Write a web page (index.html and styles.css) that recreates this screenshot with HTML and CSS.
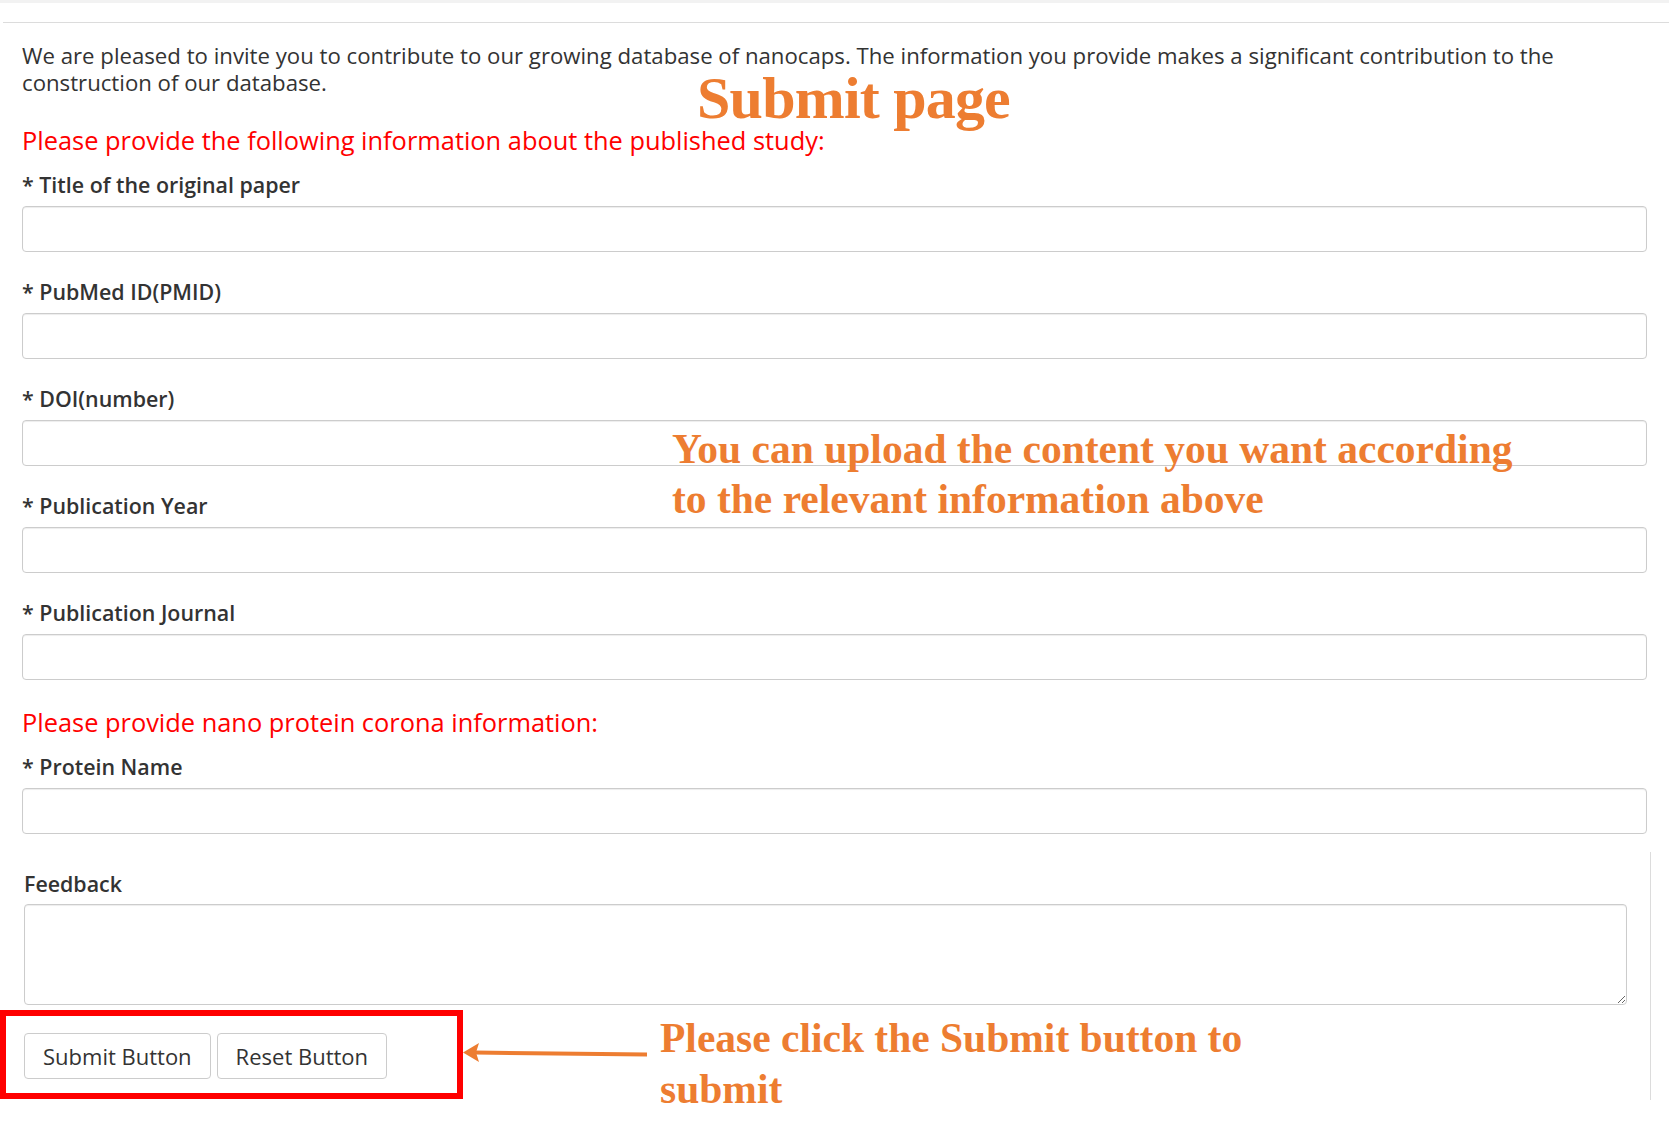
FILE: index.html
```html
<!DOCTYPE html>
<html lang="en">
<head>
<meta charset="utf-8">
<title>Submit page</title>
<link rel="stylesheet" href="styles.css">
</head>
<body>
<div class="topbar"></div>
<div class="rule"></div>
<main class="content">
  <p class="intro">We are pleased to invite you to contribute to our growing database of nanocaps. The information you provide makes a significant contribution to the construction of our database.</p>
  <form class="form">
    <h3 class="section-title">Please provide the following information about the published study:</h3>
    <div class="field">
      <label class="field-label">* Title of the original paper</label>
      <input class="field-input" type="text">
    </div>
    <div class="field">
      <label class="field-label">* PubMed ID(PMID)</label>
      <input class="field-input" type="text">
    </div>
    <div class="field">
      <label class="field-label">* DOI(number)</label>
      <input class="field-input" type="text">
    </div>
    <div class="field">
      <label class="field-label">* Publication Year</label>
      <input class="field-input" type="text">
    </div>
    <div class="field">
      <label class="field-label">* Publication Journal</label>
      <input class="field-input" type="text">
    </div>
    <h3 class="section-title">Please provide nano protein corona information:</h3>
    <div class="field field-last">
      <label class="field-label">* Protein Name</label>
      <input class="field-input" type="text">
    </div>
  </form>
</main>
<section class="feedback">
  <label class="field-label">Feedback</label>
  <textarea class="feedback-input"></textarea>
  <div class="actions">
    <button class="btn" type="button">Submit Button</button>
    <button class="btn" type="button">Reset Button</button>
  </div>
</section>

<div class="note note-title">Submit page</div>
<div class="note note-upload">You can upload the content you want according to the relevant information above</div>
<div class="note note-click">Please click the Submit button to submit</div>
<div class="highlight-box"></div>
<svg class="arrow" width="200" height="30" viewBox="0 0 200 30">
  <line x1="12" y1="13.5" x2="184" y2="15.5" stroke="#ED7D31" stroke-width="4"/>
  <polygon points="0,13.5 16,4 13,13.5 16,23" fill="#ED7D31"/>
</svg>
</body>
</html>
```

FILE: styles.css
```css
html, body {
  margin: 0;
  padding: 0;
  background: #fff;
}
body {
  width: 1669px;
  font-family: "Open Sans", "Noto Sans", sans-serif;
  color: #333;
  position: relative;
  min-height: 1139px;
}
.topbar {
  height: 3px;
  background: #f2f2f2;
}
.rule {
  margin: 19px 0 0 3px;
  border-top: 1px solid #dcdcdc;
}
.content {
  padding: 0 22px;
}
.intro {
  margin: 19px 0 28px;
  font-size: 22.2px;
  line-height: 27px;
  color: #333;
}
.form {
  margin: 0;
}
.section-title {
  margin: 1px 0 15px;
  font-size: 25.4px;
  line-height: 32px;
  font-weight: 400;
  color: #f00;
}
.field {
  margin-bottom: 26px;
}
.field-last {
  margin-bottom: 0;
}
.field-label {
  display: block;
  font-size: 21.4px;
  line-height: 27px;
  font-weight: 600;
  color: #333;
  margin-bottom: 8px;
}
.field-input {
  display: block;
  box-sizing: border-box;
  width: 100%;
  height: 46px;
  margin: 0;
  border: 1px solid #ccc;
  border-radius: 4px;
  box-shadow: inset 0 1px 1px rgba(0,0,0,.075);
  font-family: inherit;
  font-size: 20px;
  padding: 6px 12px;
  background: #fff;
}
.feedback {
  box-sizing: border-box;
  width: 1651px;
  margin-top: 18px;
  padding: 18px 23px 21px 24px;
  border-right: 1px solid #dcdcdc;
}
.feedback .field-label {
  margin-bottom: 7px;
}
.feedback-input {
  display: block;
  box-sizing: border-box;
  width: 100%;
  height: 101px;
  margin: 0;
  border: 1px solid #ccc;
  border-radius: 4px;
  box-shadow: inset 0 1px 1px rgba(0,0,0,.075);
  font-family: inherit;
  font-size: 20px;
  padding: 6px 12px;
  resize: vertical;
}
.actions {
  display: flex;
  gap: 6px;
  margin-top: 28px;
}
.btn {
  box-sizing: border-box;
  height: 46px;
  padding: 0 18px;
  border: 1px solid #ccc;
  border-radius: 4px;
  background: #fff;
  color: #333;
  font-family: "Open Sans", "Noto Sans", sans-serif;
  font-size: 22px;
  line-height: 1;
}
.note {
  position: absolute;
  font-family: "Liberation Serif", "Times New Roman", serif;
  font-weight: 700;
  color: #ED7D31;
}
.note-title {
  left: 697px;
  top: 68px;
  font-size: 60px;
  line-height: 60px;
  letter-spacing: -0.8px;
  white-space: nowrap;
}
.note-upload {
  left: 672px;
  top: 424px;
  width: 870px;
  font-size: 41.5px;
  line-height: 50px;
}
.note-click {
  left: 660px;
  top: 1013px;
  width: 620px;
  font-size: 41.5px;
  line-height: 51px;
}
.highlight-box {
  position: absolute;
  left: 0;
  top: 1010px;
  width: 463px;
  height: 89px;
  box-sizing: border-box;
  border: 6px solid #f00;
}
.arrow {
  position: absolute;
  left: 463px;
  top: 1039px;
}
```
